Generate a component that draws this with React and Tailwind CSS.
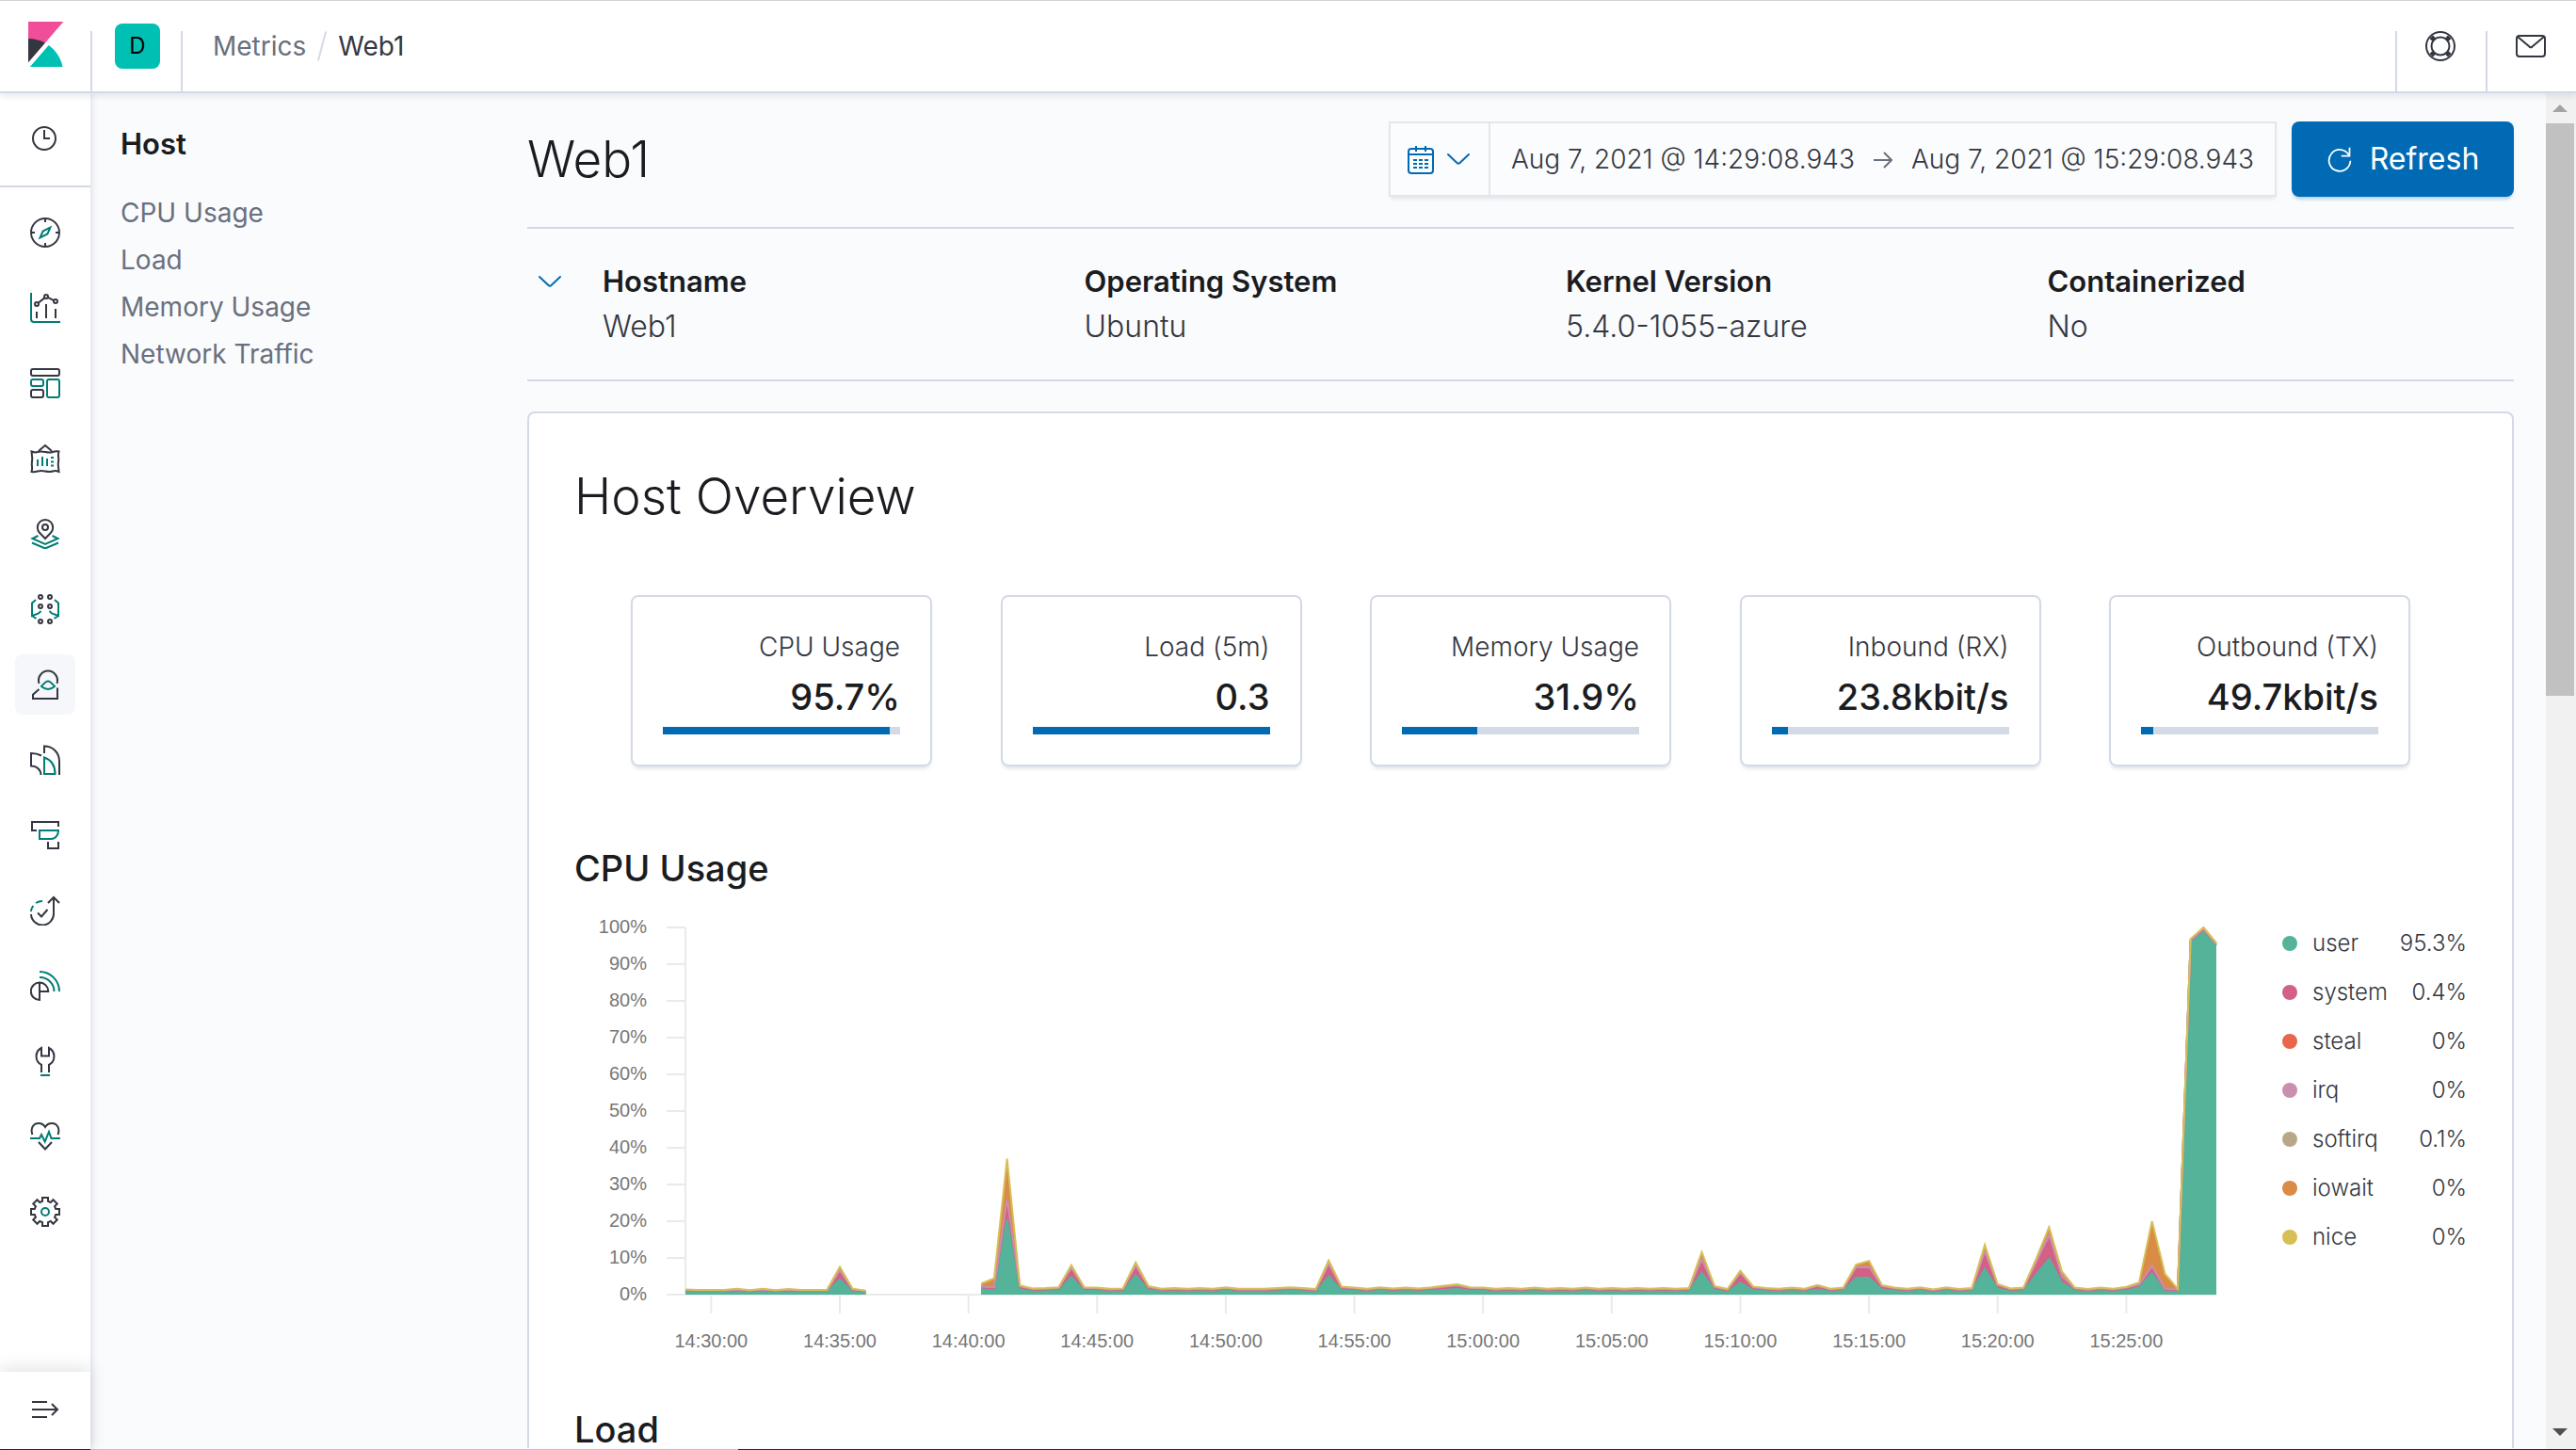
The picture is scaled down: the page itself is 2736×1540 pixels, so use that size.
import React from "react";

const DARK = "#343741";
const GREEN = "#017D73";

function Icon({ children, color = DARK, className = "size-8" }) {
  return (
    <svg viewBox="0 0 32 32" className={className} fill="none" stroke={color} strokeWidth="2" aria-hidden="true">
      {children}
    </svg>
  );
}

const gearPath = (() => {
  const pts = [];
  for (let i = 0; i < 8; i += 1) {
    const a = (i * Math.PI) / 4;
    [[-3, -11.2], [-3, -15], [3, -15], [3, -11.2]].forEach(([x, y]) => {
      const px = 16 + x * Math.cos(a) - y * Math.sin(a);
      const py = 16 + x * Math.sin(a) + y * Math.cos(a);
      pts.push(`${px.toFixed(2)} ${py.toFixed(2)}`);
    });
  }
  return `M${pts.join("L")}Z`;
})();

const NAV = [
  {
    label: "Discover",
    icon: (
      <>
        <circle cx="16" cy="16" r="15" />
        <path d="M16 1v4M16 27v4M1 16h4M27 16h4" />
        <path stroke={GREEN} d="M21.4 10.6l-3 6.9-7.8 3.9 3-6.9z" />
      </>
    ),
  },
  {
    label: "Visualize",
    icon: (
      <>
        <path stroke={GREEN} d="M1 0v28a3 3 0 0 0 3 3h28" />
        <circle cx="7" cy="12" r="2" />
        <circle cx="17" cy="4" r="2" />
        <circle cx="27" cy="9" r="2" />
        <path d="M8.6 10.8l6.8-5.4M18.8 4.9l6.4 3.2M7 20v7M17 12v15M27 17v10" />
      </>
    ),
  },
  {
    label: "Dashboard",
    icon: (
      <>
        <rect x="1" y="1" width="30" height="7" rx="2" />
        <rect x="1" y="12" width="13" height="7" rx="2" stroke={GREEN} />
        <rect x="1" y="23" width="13" height="8" rx="2" />
        <rect x="18" y="12" width="13" height="19" rx="2" stroke={GREEN} />
      </>
    ),
  },
  {
    label: "Canvas",
    icon: (
      <>
        <path d="M9 8l7-6 7 6" />
        <path d="M1.500 8.500q3.500 1.500 6.500.5t8 0 8 0 6.500-.5q-1 3-.5 5.500t0 5.500 0 5.500l.5 5q-3.500-1.500-6.500-.5t-8 0-8 0-6.500.5q1-3 .5-5.500t0-5.500 0-5.500z" />
        <path stroke={GREEN} d="M8 17v7M13 14v10M18 16v8M22 15h3M22 19.500h3M22 23.500h3" />
      </>
    ),
  },
  {
    label: "Maps",
    icon: (
      <>
        <path d="M16 21l-5.800-6a8.200 8.200 0 1 1 11.600 0z" />
        <circle cx="16" cy="9" r="3" />
        <path stroke={GREEN} d="M8.500 18l-6 3L16 27l13.500-6-6-3M2 25.500l14 6 14-6" />
      </>
    ),
  },
  {
    label: "Machine Learning",
    icon: (
      <>
        {[11, 21].map((x) => [3, 13, 29].map((y) => <circle key={`${x}-${y}`} cx={x} cy={y} r="2" />))}
        <path stroke={GREEN} d="M6 6L2 9.500V23l7-2.500 2.500-2.500M2 23l4.500 3M26 6l4 3.500V23l-7-2.500-2.500-2.500M30 23l-4.500 3" />
      </>
    ),
  },
  {
    label: "Metrics",
    active: true,
    icon: (
      <>
        <path d="M9.600 15A10 10 0 1 1 28.400 15" />
        <path stroke={GREEN} d="M12 18C14.500 15 16.500 12.500 19 12.500S23.500 15 26 18C21.500 21.800 16.500 21.800 12 18z" />
        <path d="M9.500 21L3 26.700V31h26V19.500" />
      </>
    ),
  },
  {
    label: "Logs",
    icon: (
      <>
        <path d="M15 9V1.500C24 1.500 31 8 31 18v14" />
        <path stroke={GREEN} d="M15 13.500V31h11.500C26.500 22.500 22.500 16 15 13.500z" />
        <path d="M12 11.500C9 10 5 9 1 9v13.500c6 0 10.500 4 10.500 9.500" />
      </>
    ),
  },
  {
    label: "APM",
    icon: (
      <>
        <path d="M7 11H2V2h28v5" />
        <path stroke={GREEN} d="M10 11h20c0 5-3 9-8 9H10z" />
        <path d="M19 23v7h11v-7" />
      </>
    ),
  },
  {
    label: "Uptime",
    icon: (
      <>
        <path d="M25 2v17A12 12 0 0 1 1 20M19 8l6-6 6 6M8 18.500l4 4 6.500-7.500" />
        <path stroke={GREEN} d="M.8 17q.6-3.500 2.500-6M6 8q3.500-2 7-2" />
      </>
    ),
  },
  {
    label: "SIEM",
    icon: (
      <>
        <path d="M10 12.500V31A9.200 9.200 0 1 1 19.200 22H10" />
        <path stroke={GREEN} d="M10 7a15 15 0 0 1 15.500 15M10 1a21 21 0 0 1 21 21" />
      </>
    ),
  },
  {
    label: "Dev Tools",
    icon: (
      <>
        <path d="M12 28v-8.200A10 10 0 0 1 12 2v8.500h8V2A10 10 0 0 1 20 19.800V28" />
        <path stroke={GREEN} d="M11 31h10" />
      </>
    ),
  },
  {
    label: "Stack Monitoring",
    icon: (
      <>
        <path d="M2.500 14C0 8 3 2 9 2c3 0 5.500 1.500 7 4 1.500-2.500 4-4 7-4 6 0 9 6 6.500 12M9 22l7 7.500 7-7.500" />
        <path stroke={GREEN} d="M0 18h10l2-4 3.700 7.500L20 11l2.500 7H32" />
      </>
    ),
  },
  {
    label: "Management",
    icon: (
      <>
        <path d={gearPath} />
        <circle cx="16" cy="16" r="4" stroke={GREEN} />
      </>
    ),
  },
];

const SECTIONS = ["CPU Usage", "Load", "Memory Usage", "Network Traffic"];

const META = [
  ["Hostname", "Web1"],
  ["Operating System", "Ubuntu"],
  ["Kernel Version", "5.4.0-1055-azure"],
  ["Containerized", "No"],
];

const GAUGES = [
  { label: "CPU Usage", value: "95.7%", fill: 95.7 },
  { label: "Load (5m)", value: "0.3", fill: 100 },
  { label: "Memory Usage", value: "31.9%", fill: 31.9 },
  { label: "Inbound (RX)", value: "23.8kbit/s", fill: 6.8 },
  { label: "Outbound (TX)", value: "49.7kbit/s", fill: 5.2 },
];

const LEGEND = [
  ["user", "95.3%", "bg-[#54B399]"],
  ["system", "0.4%", "bg-[#D36086]"],
  ["steal", "0%", "bg-[#E7664C]"],
  ["irq", "0%", "bg-[#CA8EAE]"],
  ["softirq", "0.1%", "bg-[#B9A888]"],
  ["iowait", "0%", "bg-[#DA8B45]"],
  ["nice", "0%", "bg-[#D6BF57]"],
];

/* Total CPU per 30 s bucket, counted from 14:29:00. */
const TOTALS = [
  1.4, 1.3, 1.3, 1.3, 1.6, 1.2, 1.6, 1.2, 1.5, 1.3, 1.3, 1.3, 7.6, 1.6, 1.1,
  null, null, null, null, null, null, null, null,
  3, 4.4, 37, 2.5, 1.7, 1.8, 2, 8, 2, 1.9, 1.6, 1.7, 8.8, 2.3, 1.6, 1.8, 1.6,
  1.8, 1.6, 2, 1.6, 1.6, 1.6, 1.8, 2, 1.8, 1.5, 9.3, 2.2, 1.9, 1.6, 2, 1.7,
  1.9, 1.7, 2, 2.4, 2.8, 2, 1.9, 1.6, 1.8, 1.6, 1.9, 1.6, 1.8, 1.6, 1.9, 1.6,
  1.8, 1.6, 1.8, 1.6, 1.8, 1.6, 1.8, 11.6, 2.3, 1.5, 6.5, 2.2, 1.8, 1.6, 1.9,
  1.6, 2.6, 1.6, 1.9, 8.2, 9.2, 2.6, 1.9, 1.6, 2, 1.4, 2, 1.5, 1.8, 13.6, 2.9,
  1.7, 1.9, 9.8, 18.4, 6.3, 1.9, 1.5, 1.9, 1.6, 2.1, 3.3, 20, 5.7, 1.6, 96.9,
  100, 95.8,
];

/* Tops of the user, system and softirq layers where load was more than idle. */
const LAYERS = {
  12: [4.1, 6.2, 6.6], 23: [1.5, 2, 2.2], 24: [1.3, 1.8, 2], 25: [20.5, 24.5, 26],
  30: [4.8, 7, 7.3], 35: [5.3, 7.4, 7.9], 50: [5, 8, 8.4], 79: [6, 8.6, 9.6],
  82: [3.2, 5.6, 6], 91: [4.6, 7, 7.6], 92: [4.6, 7, 7.6], 101: [7, 10.8, 11.8],
  105: [5.5, 8.3, 8.9], 106: [9.8, 15, 16.4], 107: [3.3, 4.6, 5], 113: [2, 2.6, 2.8],
  114: [5.8, 7.2, 7.8], 115: [0.9, 1.4, 1.6], 117: [96.1, 96.5, 96.6],
  118: [98.9, 99.4, 99.6], 119: [95, 95.4, 95.5],
};

const X0 = 118;
const Y0 = 425;
const STEP = 13.664;
const UNIT = 3.9;
const px = (i) => X0 + i * STEP;
const py = (v) => Y0 - v * UNIT;

function runs(values) {
  const out = [];
  let cur = [];
  values.forEach((v, i) => {
    if (v === null) {
      if (cur.length) out.push(cur);
      cur = [];
    } else cur.push([px(i).toFixed(1), py(v).toFixed(1)]);
  });
  if (cur.length) out.push(cur);
  return out;
}

const layer = (n) =>
  TOTALS.map((t, i) => (t === null ? null : LAYERS[i] ? LAYERS[i][n] : t * [0.55, 0.8, 0.9][n]));

const STACK = [
  [TOTALS, "#DA8B45", "#D6BF57"],
  [layer(2), "#B9A888", "#CA8EAE"],
  [layer(1), "#D36086", "#D36086"],
  [layer(0), "#54B399", "#54B399"],
];

const TIMES = [
  "14:30:00", "14:35:00", "14:40:00", "14:45:00", "14:50:00", "14:55:00",
  "15:00:00", "15:05:00", "15:10:00", "15:15:00", "15:20:00", "15:25:00",
];

const toLine = (pts) => pts.map((p) => p.join(" ")).join("L");

function CpuChart() {
  return (
    <svg viewBox="0 0 1762 500" className="block h-auto w-full" role="img" aria-label="CPU usage over time">
      <g stroke="#EAEAEA" strokeWidth="2" fill="none">
        <path d={`M${X0} 35V${Y0}H1744`} />
        {Array.from({ length: 11 }, (_, i) => (
          <path key={i} d={`M98 ${py(i * 10)}H${X0}`} />
        ))}
        {TIMES.map((t, i) => (
          <path key={t} d={`M${px(2 + i * 10)} ${Y0}v20`} />
        ))}
      </g>
      {STACK.map(([values, fill], s) =>
        runs(values).map((pts, r) => (
          <path key={`${s}-${r}`} fill={fill} d={`M${toLine(pts)}L${pts[pts.length - 1][0]} ${Y0}L${pts[0][0]} ${Y0}Z`} />
        ))
      )}
      {[...STACK].reverse().map(([values, , stroke], s) =>
        runs(values).map((pts, r) => (
          <path key={`${s}-${r}`} fill="none" stroke={stroke} strokeWidth="2" d={`M${toLine(pts)}`} />
        ))
      )}
      <g fill="#777777" fontSize="20" fontFamily="'Liberation Sans', Arial, sans-serif">
        {Array.from({ length: 11 }, (_, i) => (
          <text key={i} x="77" y={py(i * 10) + 6} textAnchor="end">{i * 10}%</text>
        ))}
        {TIMES.map((t, i) => (
          <text key={t} x={px(2 + i * 10)} y="481" textAnchor="middle">{t}</text>
        ))}
      </g>
    </svg>
  );
}

function Header() {
  return (
    <header className="relative z-20 flex h-[99px] shrink-0 border-t border-b-2 border-t-[#d2d2d2] border-b-[#D3DAE6] bg-white shadow-[0_4px_6px_rgba(152,162,179,0.2)]">
      <a href="#home" aria-label="Kibana home" className="flex w-24 justify-center pt-[22px]">
        <svg viewBox="0 0 32 32" className="size-12" aria-hidden="true">
          <path fill="#F04E98" d="M4 0v28.789L28.935.017z" />
          <path fill="#343741" d="M4 12v16.789l11.906-13.738A24.721 24.721 0 0 0 4 12" />
          <path fill="#00BFB3" d="M18.479 16.664L6.268 30.754l-1.073 1.237h23.191c-1.252-6.292-4.883-11.719-9.908-15.327" />
        </svg>
      </a>
      <div className="mt-8 w-[2px] bg-[#D3DAE6]" />
      <button type="button" aria-label="Default space" className="flex w-[94px] justify-center pt-6 pl-[2px]">
        <span className="flex size-12 items-center justify-center rounded-lg bg-[#00BFB3] text-2xl text-black">D</span>
      </button>
      <div className="mt-8 w-[2px] bg-[#D3DAE6]" />
      <nav aria-label="Breadcrumb" className="flex flex-1 items-center pl-8 text-[28px]">
        <a href="#metrics" className="text-[#69707D]">Metrics</a>
        <span className="mx-4 h-8 w-[2px] rotate-15 bg-[#D3DAE6]" />
        <span className="text-[#343741]">Web1</span>
      </nav>
      <div className="mt-8 w-[2px] bg-[#D3DAE6]" />
      <button type="button" aria-label="Help" className="flex w-[94px] items-center justify-center pr-[2px]">
        <Icon>
          <circle cx="16" cy="16" r="15" />
          <circle cx="16" cy="16" r="9.500" />
          <path strokeWidth="5" d="M6.300 6.300l3 3M25.700 6.300l-3 3M6.300 25.700l3-3M25.700 25.700l-3-3" />
        </Icon>
      </button>
      <div className="mt-8 w-[2px] bg-[#D3DAE6]" />
      <button type="button" aria-label="Newsfeed" className="flex w-[94px] items-center justify-center pr-[2px]">
        <Icon>
          <rect x="1" y="5" width="30" height="22" rx="3" />
          <path d="M2 6l12.500 10.600q1.500 1.200 3 0L30 6" />
        </Icon>
      </button>
    </header>
  );
}

function NavRail() {
  return (
    <nav aria-label="Applications" className="z-10 flex w-24 shrink-0 flex-col bg-white shadow-[0_0_8px_rgba(100,106,119,0.25)]">
      <button type="button" aria-label="Recently viewed" className="flex h-[100px] shrink-0 items-center justify-center border-b-2 border-[#D3DAE6]">
        <Icon>
          <circle cx="15" cy="15" r="12" />
          <path d="M15 6v9h6" />
        </Icon>
      </button>
      <ul className="flex flex-1 flex-col items-center gap-4 overflow-hidden pt-4">
        {NAV.map(({ label, icon, active }) => (
          <li key={label}>
            <a
              href={`#${label}`}
              aria-label={label}
              aria-current={active ? "page" : undefined}
              className={`flex size-16 items-center justify-center rounded-lg ${active ? "bg-[#F5F7FA]" : ""}`}
            >
              <Icon>{icon}</Icon>
            </a>
          </li>
        ))}
      </ul>
      <button type="button" aria-label="Expand navigation" className="flex h-[82px] shrink-0 items-center justify-center shadow-[0_-4px_16px_rgba(100,106,119,0.18)]">
        <Icon>
          <path d="M2 7h16M2 15h27M2 23h16M23 9l6 6-6 6" />
        </Icon>
      </button>
    </nav>
  );
}

function Chevron() {
  return (
    <Icon color="#006BB4">
      <path strokeLinecap="round" d="M5 11l9.500 9q1.500 1.200 3 0l9.500-9" />
    </Icon>
  );
}

function Toolbar() {
  return (
    <div className="flex h-20 items-center justify-between">
      <h1 className="text-[53px] leading-[80px] font-light text-[#1A1C21]">Web1</h1>
      <div className="flex h-20 gap-4">
        <div className="flex items-stretch border-2 border-[#E3E6ED] bg-[#FBFCFD] text-[28px] font-light text-[#343741] shadow-[0_4px_4px_-2px_rgba(152,162,179,0.25)]">
          <button type="button" aria-label="Quick select dates" className="flex items-center gap-2 border-r-2 border-[#E3E6ED] px-4">
            <Icon color="#006BB4">
              <rect x="3" y="5" width="26" height="26" rx="3" />
              <path d="M3 11h26M11 2v6M21 2v6M8 17h4M14 17h4M20 17h4M8 21h4M14 21h4M20 21h4M8 25h4M14 25h4M20 25h4" />
            </Icon>
            <Chevron />
          </button>
          <div className="flex items-center gap-5 px-[22px]">
            <button type="button">Aug 7, 2021 @ 14:29:08.943</button>
            <svg viewBox="0 0 20 20" className="size-5" fill="none" stroke="#69707D" strokeWidth="2" aria-hidden="true">
              <path d="M0 11h19M11 3l8 8-8 8" />
            </svg>
            <button type="button">Aug 7, 2021 @ 15:29:08.943</button>
          </div>
        </div>
        <button type="button" className="flex w-[236px] items-center justify-center gap-[18px] rounded-lg bg-[#006BB4] text-[32px] text-white shadow-[0_4px_4px_-2px_rgba(0,107,180,0.35)]">
          <Icon color="#ffffff" className="size-7">
            <path d="M28 2v10H18M27.500 11.500A13 13 0 1 0 29 18" />
          </Icon>
          Refresh
        </button>
      </div>
    </div>
  );
}

function HostOverview() {
  return (
    <section className="mt-8 rounded-t-lg border-2 border-b-0 border-[#D3DAE6] bg-white p-12 pb-0 text-[#1A1C21]">
      <h2 className="text-[53px] leading-[80px] font-light">Host Overview</h2>
      <div className="mt-[65px] flex justify-between px-[60px]">
        {GAUGES.map(({ label, value, fill }) => (
          <div key={label} className="w-80 rounded-lg border-2 border-[#D3DAE6] p-8 text-right shadow-[0_4px_4px_-2px_rgba(152,162,179,0.35)]">
            <p className="text-[28px] leading-[42px] font-light text-[#343741]">{label}</p>
            <p className="text-[38px] leading-[64px] font-medium">{value}</p>
            <div className="h-2 bg-[#D3DAE6]">
              <div className="h-2 bg-[#006BB4]" style={{ width: `${fill}%` }} />
            </div>
          </div>
        ))}
      </div>
      <h3 className="mt-[88px] mb-2 text-[38px] leading-[40px] font-medium">CPU Usage</h3>
      <div className="flex">
        <div className="min-w-0 flex-1">
          <CpuChart />
        </div>
        <ul className="ml-[52px] w-[196px] pt-[26px] text-2xl leading-[52px] font-light text-[#343741]">
          {LEGEND.map(([name, value, dot]) => (
            <li key={name} className="flex items-center">
              <span className={`mr-4 size-4 rounded-full ${dot}`} />
              <span className="flex-1">{name}</span>
              <span>{value}</span>
            </li>
          ))}
        </ul>
      </div>
      <h3 className="mt-12 text-[38px] leading-[40px] font-medium">Load</h3>
    </section>
  );
}

export default function App() {
  return (
    <div className="flex h-screen flex-col overflow-hidden bg-[#FAFBFD] font-['Inter',sans-serif]">
      <Header />
      <div className="flex min-h-0 flex-1">
        <NavRail />
        <aside className="w-[464px] shrink-0 px-8 pt-[30px]">
          <h2 className="text-[31px] leading-[48px] font-semibold text-[#1A1C21]">Host</h2>
          <ul className="mt-6 text-[28px] leading-[50px] text-[#69707D]">
            {SECTIONS.map((s) => (
              <li key={s}>
                <a href={`#${s}`}>{s}</a>
              </li>
            ))}
          </ul>
        </aside>
        <main className="min-w-0 flex-1 overflow-hidden pt-[30px] pr-[34px]">
          <Toolbar />
          <div className="mt-8 flex border-y-2 border-[#D3DAE6] py-8 leading-[48px]">
            <button type="button" aria-label="Toggle host details" className="flex h-12 w-20 items-center pl-2">
              <Chevron />
            </button>
            <dl className="-mr-4 grid flex-1 grid-cols-4">
              {META.map(([k, v]) => (
                <div key={k}>
                  <dt className="text-[31px] font-semibold text-[#1A1C21]">{k}</dt>
                  <dd className="text-[32px] font-light text-[#343741]">{v}</dd>
                </div>
              ))}
            </dl>
          </div>
          <HostOverview />
        </main>
        <div className="flex w-8 shrink-0 flex-col items-center bg-[#F1F1F1]" aria-hidden="true">
          <svg viewBox="0 0 32 32" className="size-8 shrink-0">
            <path fill="#A3A3A3" d="M7 20l8-8 8 8z" />
          </svg>
          <div className="h-[608px] w-[30px] self-start bg-[#C1C1C1]" />
          <svg viewBox="0 0 32 32" className="mt-auto size-8 shrink-0">
            <path fill="#505050" d="M7 10l8 8 8-8z" />
          </svg>
        </div>
      </div>
      <div className="flex h-px shrink-0" aria-hidden="true">
        <div className="w-24 bg-[#1c1c1c]" />
        <div className="w-[688px] bg-[#c0c3c7]" />
        <div className="flex-1 bg-[#2a2a2a]" />
      </div>
    </div>
  );
}
